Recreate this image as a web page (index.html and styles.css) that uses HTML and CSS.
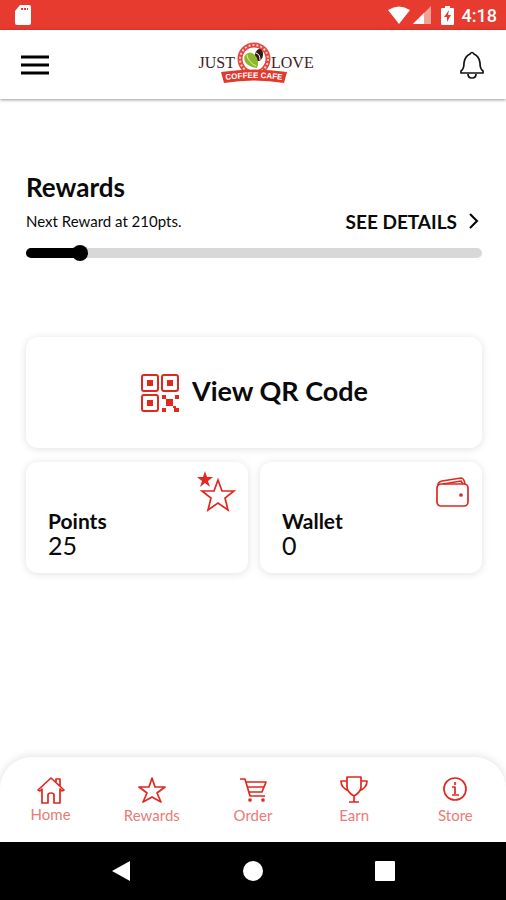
FILE: index.html
```html
<!DOCTYPE html>
<html lang="en">
<head>
    <meta charset="UTF-8">
    <meta name="viewport" content="width=device-width, initial-scale=1.0">
    <title>Just Love Coffee Cafe</title>
    <link rel="stylesheet" href="styles.css">
</head>
<body>

<div class="status-bar">
    <svg width="18" height="22" viewBox="0 0 18 22" aria-hidden="true">
        <path d="M6 1h9q2 0 2 2v16q0 2-2 2H3q-2 0-2-2V7z" fill="#fff"/>
        <path d="M7 5h2M10 5h2M13 5h1" stroke="#e63b2e" stroke-width="2"/>
    </svg>
    <div class="status-icons">
        <svg width="24" height="19" viewBox="0 0 24 19" aria-hidden="true">
            <path d="M1 4Q12-3 23 4L12 18z" fill="#fff"/>
        </svg>
        <svg width="18" height="18" viewBox="0 0 18 18" aria-hidden="true">
            <path d="M0 18L18 0v18z" fill="#f3a099"/>
            <path d="M0 18L11 7v11z" fill="#fff"/>
        </svg>
        <svg class="battery" width="13" height="19" viewBox="0 0 13 19" aria-hidden="true">
            <path d="M4 0h5v2h3q1 0 1 1v15q0 1-1 1H1q-1 0-1-1V3q0-1 1-1h3z" fill="#fff"/>
            <path d="M8 4L3 11h3v5l4-7H7z" fill="#e63b2e"/>
        </svg>
        <span class="clock">4:18</span>
    </div>
</div>

<header class="header">
    <button class="icon-button" aria-label="Menu">
        <svg width="28" height="20" viewBox="0 0 28 20" aria-hidden="true">
            <path d="M0 2h28M0 10h28M0 18h28" stroke="#000" stroke-width="3"/>
        </svg>
    </button>
    <a class="logo" href="#" aria-label="Just Love Coffee Cafe">
        <svg width="120" height="48" viewBox="0 0 120 48">
            <circle cx="60" cy="18" r="14" fill="none" stroke="#e2483f" stroke-width="5"/>
            <circle cx="60" cy="18" r="14" fill="none" stroke="#f8cfcb" stroke-width="2" stroke-dasharray="2 2"/>
            <circle cx="60" cy="18" r="11" fill="#fff"/>
            <ellipse cx="65" cy="14" rx="4" ry="6" transform="rotate(10 65 14)" fill="#35191a"/>
            <path d="M62 12q4 1 4 7" fill="none" stroke="#fff"/>
            <path d="M51 14q5-5 10 0 5 5 2 13-8-1-11-5-3-4-1-8z" fill="#8cb82c"/>
            <path d="M53 14q1 7 9 11" fill="none" stroke="#e2efb8"/>
            <path d="M27 31q33-5 66 0l-3 11q-30-5-60 0z" fill="#e03a2e"/>
            <path id="ribbon" d="M32 39q28-4 56 0" fill="none"/>
            <text class="logo-ribbon"><textPath href="#ribbon" startOffset="50%" text-anchor="middle">COFFEE CAFE</textPath></text>
            <text class="logo-word" x="41" y="27" text-anchor="end">JUST</text>
            <text class="logo-word" x="77" y="27">LOVE</text>
        </svg>
    </a>
    <button class="icon-button" aria-label="Notifications">
        <svg width="26" height="28" viewBox="0 0 26 28" fill="none" stroke="#111" stroke-width="1.7" stroke-linejoin="round" aria-hidden="true">
            <path d="M11 3q2-3 4 0 5 2 6 9 0 6 3 8v2H2v-2q3-2 3-8 1-7 6-9z"/>
            <path d="M9 23q0 4 4 4t4-4"/>
        </svg>
    </button>
</header>

<main class="content">
    <section class="rewards">
        <h1>Rewards</h1>
        <div class="rewards-row">
            <label for="rewardProgress">Next Reward at 210pts.</label>
            <a class="details" href="#">SEE DETAILS
                <svg width="10" height="16" viewBox="0 0 10 16" fill="none" stroke="#000" stroke-width="2" aria-hidden="true">
                    <path d="M1 1l7 7-7 7"/>
                </svg>
            </a>
        </div>
        <input type="range" id="rewardProgress" class="progress" min="0" max="210" value="22">
    </section>

    <section class="cards">
        <button class="card qr-card">
            <svg width="40" height="40" viewBox="0 0 40 40" aria-hidden="true">
                <g fill="none" stroke="#e0281f" stroke-width="2">
                    <rect x="2" y="2" width="16" height="16" rx="2"/>
                    <rect x="22" y="2" width="16" height="16" rx="2"/>
                    <rect x="2" y="22" width="16" height="16" rx="2"/>
                </g>
                <path fill="#e0281f" d="M7 7h6v6H7zM27 7h6v6h-6zM7 27h6v6H7zM22 22h4v4h-4zM35 22h4v4h-4zM26 26h7v7h-7zM22 35h4v4h-4zM33 33h3v2h3v4h-5v-4h-1z"/>
            </svg>
            <span>View QR Code</span>
        </button>
        <a class="card stat-card" href="#">
            <svg width="40" height="42" viewBox="0 0 40 42" aria-hidden="true">
                <path d="M9 1l2 6h6l-5 4 2 6-5-4-5 4 2-6-5-4h6z" fill="#e0281f"/>
                <path d="M22 10l4 11h12l-9 7 3 12-10-7-10 7 3-12-9-7h12z" fill="none" stroke="#e0281f" stroke-width="1.7"/>
            </svg>
            <span class="stat-name">Points</span>
            <span class="stat-value">25</span>
        </a>
        <a class="card stat-card" href="#">
            <svg class="wallet" width="34" height="30" viewBox="0 0 34 30" fill="none" stroke="#e0281f" stroke-width="1.7" stroke-linejoin="round" aria-hidden="true">
                <rect x="1" y="7" width="31" height="22" rx="4"/>
                <path d="M2 8q0-3 4-4l19-3q3 0 4 6M7 7l18-3 2 3"/>
                <circle cx="25" cy="18" r="1" fill="#e0281f"/>
            </svg>
            <span class="stat-name">Wallet</span>
            <span class="stat-value">0</span>
        </a>
    </section>
</main>

<nav class="tab-bar">
    <a class="tab active" href="#">
        <svg width="30" height="28" viewBox="0 0 30 28" aria-hidden="true">
            <path d="M2 14L15 2l13 12-2 1-2-2v14h-6v-8q0-2-3-2t-3 2v8H6V13l-2 2zM20 6V3h4v7"/>
        </svg>
        Home
    </a>
    <a class="tab" href="#">
        <svg width="30" height="28" viewBox="0 0 30 28" aria-hidden="true">
            <path d="M15 2l3 9h10l-8 6 4 9-9-5-9 5 4-9-8-6h10z"/>
        </svg>
        Rewards
    </a>
    <a class="tab" href="#">
        <svg width="30" height="28" viewBox="0 0 30 28" aria-hidden="true">
            <path d="M2 3h5l5 17h15M8 6h20l-4 10H11M9 11h17"/>
            <circle cx="12" cy="24" r="1"/>
            <circle cx="25" cy="24" r="1"/>
        </svg>
        Order
    </a>
    <a class="tab" href="#">
        <svg width="30" height="28" viewBox="0 0 30 28" aria-hidden="true">
            <path d="M8 1h14v10q0 5-7 9-7-4-7-9zM8 5H2q0 7 8 10M22 5h6q0 7-8 10M15 20v6M10 26h10"/>
        </svg>
        Earn
    </a>
    <a class="tab" href="#">
        <svg width="30" height="28" viewBox="0 0 30 28" aria-hidden="true">
            <circle cx="15" cy="13" r="11"/>
            <path d="M15 6v3M12 11h3v7M12 19h7"/>
        </svg>
        Store
    </a>
</nav>

<div class="system-nav">
    <button class="icon-button" aria-label="Back">
        <svg width="20" height="22" viewBox="0 0 20 22"><path d="M19 1v20L1 11z" fill="#fff"/></svg>
    </button>
    <button class="icon-button" aria-label="Home screen">
        <svg width="22" height="22" viewBox="0 0 22 22"><circle cx="11" cy="11" r="10" fill="#fff"/></svg>
    </button>
    <button class="icon-button" aria-label="Recent apps">
        <svg width="20" height="20" viewBox="0 0 20 20"><rect width="20" height="20" rx="1" fill="#fff"/></svg>
    </button>
</div>

</body>
</html>
```
FILE: styles.css
```css
* {
    box-sizing: border-box;
}
body {
    font-family: Lato, 'Open Sans', sans-serif;
    display: flex;
    flex-direction: column;
    min-height: 100vh;
    margin: 0;
    background-color: #ffffff;
    color: #0a0a0a;
}
svg {
    display: block;
    flex-shrink: 0;
}
a {
    color: inherit;
    text-decoration: none;
}
.icon-button {
    padding: 0;
    border: none;
    background: none;
    cursor: pointer;
}
.status-bar {
    display: flex;
    justify-content: space-between;
    align-items: center;
    height: 30px;
    padding: 0 9px 0 14px;
    background-color: #e63b2e;
}
.status-icons {
    display: flex;
    align-items: center;
    gap: 2px;
}
.battery {
    margin: 0 6px 0 8px;
}
.clock {
    font-family: Roboto, sans-serif;
    font-size: 18px;
    font-weight: 500;
    color: #ffffff;
}
.header {
    display: flex;
    justify-content: space-between;
    align-items: center;
    height: 69px;
    padding: 0 21px;
    box-shadow: 0 1px 3px rgba(0, 0, 0, 0.4);
}
.logo-word {
    font-family: 'Liberation Serif', serif;
    font-size: 16px;
    fill: #42201f;
}
.logo-ribbon {
    font-family: 'Liberation Sans', sans-serif;
    font-size: 8px;
    font-weight: bold;
    fill: #ffffff;
}
.content {
    flex: 1;
    padding: 74px 24px 0 26px;
}
.rewards h1 {
    margin: 0;
    font-size: 26px;
    line-height: 28px;
    font-weight: bold;
}
.rewards-row {
    display: flex;
    justify-content: space-between;
    align-items: center;
    height: 40px;
    font-size: 15px;
}
.details {
    display: flex;
    align-items: center;
    gap: 12px;
    padding-right: 3px;
    font-size: 19px;
    font-weight: bold;
}
.progress {
    display: block;
    width: 100%;
    height: 24px;
    margin: 0;
    background: none;
    -webkit-appearance: none;
    appearance: none;
}
.progress::-webkit-slider-runnable-track {
    height: 10px;
    border-radius: 5px;
    background: linear-gradient(to right, #000000 12%, #d8d8d8 12%);
}
.progress::-webkit-slider-thumb {
    -webkit-appearance: none;
    width: 16px;
    height: 16px;
    margin-top: -3px;
    border-radius: 50%;
    background-color: #000000;
}
.cards {
    display: grid;
    grid-template-columns: 1fr 1fr;
    gap: 14px 12px;
    margin-top: 72px;
}
.card {
    height: 111px;
    border: none;
    border-radius: 12px;
    background-color: #ffffff;
    box-shadow: 0 1px 8px rgba(0, 0, 0, 0.12);
}
.qr-card {
    grid-column: 1 / -1;
    display: flex;
    justify-content: center;
    align-items: center;
    gap: 12px;
    font-family: inherit;
    font-size: 27px;
    font-weight: bold;
    color: inherit;
    cursor: pointer;
}
.qr-card span {
    padding-bottom: 4px;
}
.stat-card {
    display: flex;
    flex-direction: column;
    padding: 8px 12px 0 22px;
}
.stat-card svg {
    align-self: flex-end;
}
.stat-card .wallet {
    margin: 7px 0 5px;
}
.stat-name {
    font-size: 21px;
    line-height: 18px;
    font-weight: bold;
}
.stat-value {
    font-size: 25px;
    line-height: 30px;
}
.tab-bar {
    display: flex;
    height: 85px;
    padding-top: 19px;
    border-radius: 32px 32px 0 0;
    box-shadow: 0 -1px 8px rgba(0, 0, 0, 0.12);
}
.tab {
    flex: 1;
    display: flex;
    flex-direction: column;
    align-items: center;
    gap: 1px;
    font-size: 15px;
    line-height: 20px;
    color: #ec7a76;
}
.tab.active {
    gap: 0;
}
.tab svg {
    fill: none;
    stroke: #e0281f;
    stroke-width: 1.7;
    stroke-linejoin: round;
}
.system-nav {
    display: flex;
    justify-content: space-evenly;
    align-items: center;
    height: 58px;
    background-color: #000000;
}
```
